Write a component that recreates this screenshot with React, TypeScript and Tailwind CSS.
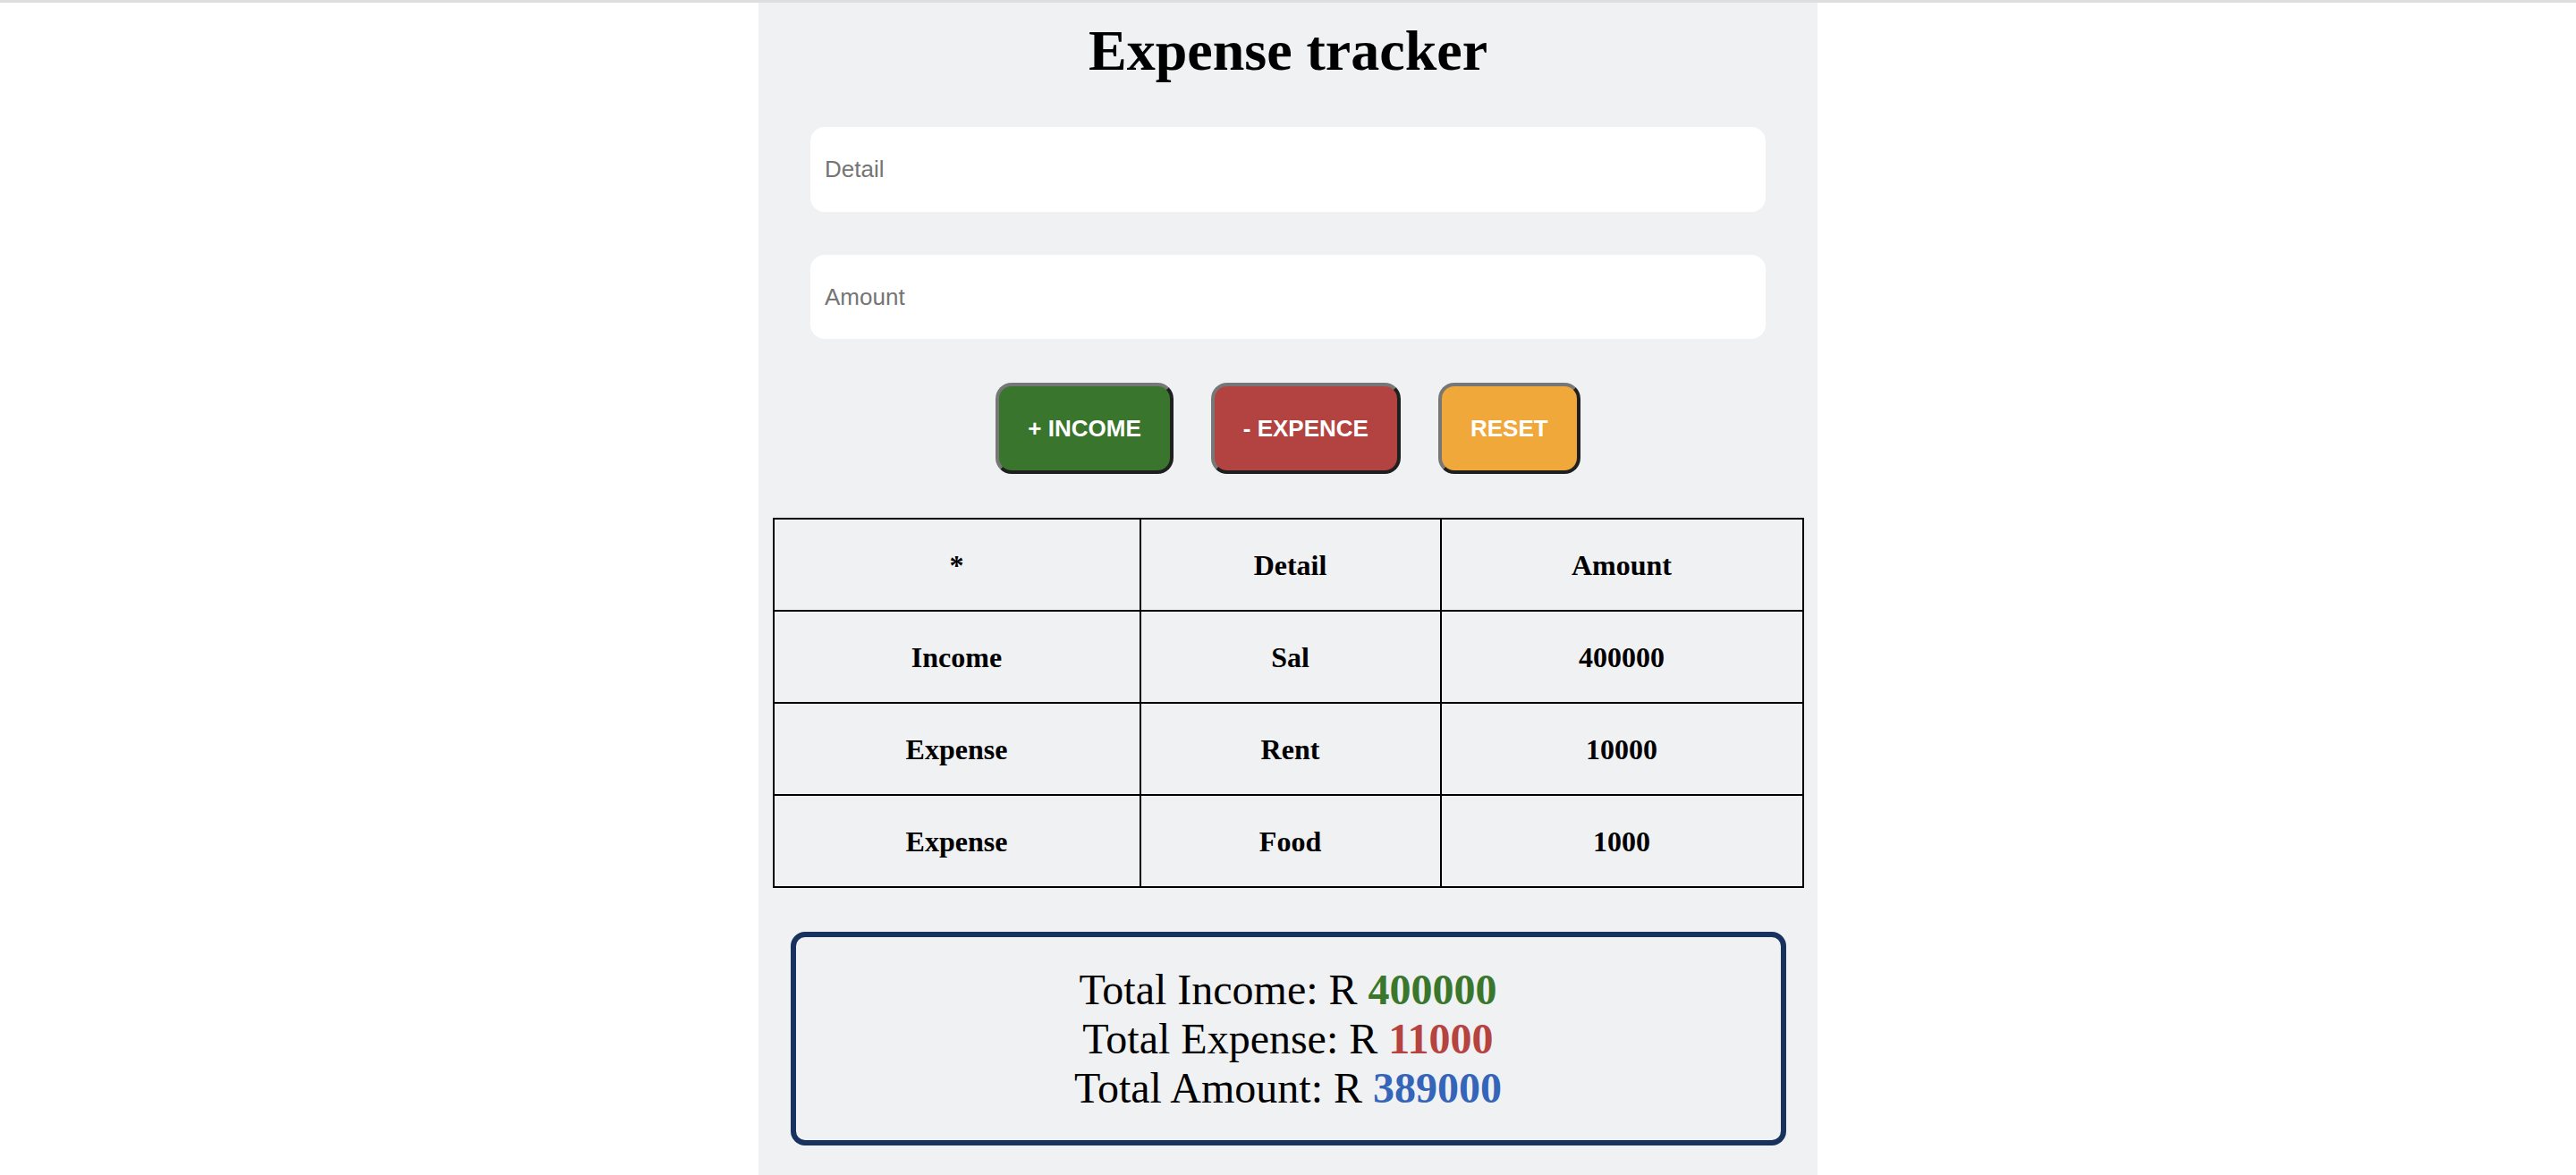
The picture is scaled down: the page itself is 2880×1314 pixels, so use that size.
import { useState } from 'react'

type Kind = 'Income' | 'Expense'

interface Entry {
  kind: Kind
  detail: string
  amount: number
}

const SERIF = "font-['Liberation_Serif','Times_New_Roman',serif]"
const SANS = "font-['Liberation_Sans',Arial,sans-serif]"

const INITIAL: Entry[] = [
  { kind: 'Income', detail: 'Sal', amount: 400000 },
  { kind: 'Expense', detail: 'Rent', amount: 10000 },
  { kind: 'Expense', detail: 'Food', amount: 1000 },
]

// outset-looking bevel shared by the three buttons
const BUTTON =
  'border-4 border-t-[#777777] border-l-[#777777] border-b-[#1f1f1f] border-r-[#1f1f1f] rounded-[18px] px-[32px] h-[102px] text-white text-[26px] font-bold leading-[30px]'

function Field({
  placeholder,
  value,
  onChange,
  className,
}: {
  placeholder: string
  value: string
  onChange: (v: string) => void
  className?: string
}) {
  return (
    <input
      type="text"
      value={value}
      placeholder={placeholder}
      onChange={(e) => onChange(e.target.value)}
      className={`${SANS} ${className ?? ''} block w-[1068px] mx-auto bg-white rounded-[16px] pl-[16px] text-[26px] text-black placeholder:text-[#757575] outline-none`}
    />
  )
}

export default function App() {
  const [detail, setDetail] = useState('')
  const [amount, setAmount] = useState('')
  const [entries, setEntries] = useState<Entry[]>(INITIAL)

  const add = (kind: Kind) => {
    const n = Number(amount)
    if (!detail.trim() || !n) return
    setEntries([...entries, { kind, detail: detail.trim(), amount: n }])
    setDetail('')
    setAmount('')
  }

  const income = entries.filter((e) => e.kind === 'Income').reduce((s, e) => s + e.amount, 0)
  const expense = entries.filter((e) => e.kind === 'Expense').reduce((s, e) => s + e.amount, 0)

  return (
    <div className="min-h-screen bg-white">
      <div className="h-[3px] bg-[#dedede]" />
      <div className={`${SERIF} w-[1184px] mx-auto bg-[#f0f1f2] min-h-[1311px] pt-[17px] pb-[40px]`}>
        <h1 className="text-center text-[64px] font-bold leading-[74px] text-black">Expense tracker</h1>

        <Field placeholder="Detail" value={detail} onChange={setDetail} className="mt-[48px] h-[95px]" />
        <Field placeholder="Amount" value={amount} onChange={setAmount} className="mt-[48px] h-[94px]" />

        <div className={`${SANS} mt-[49px] flex justify-center gap-[42px]`}>
          <button type="button" onClick={() => add('Income')} className={`${BUTTON} bg-[#39752c]`}>
            + INCOME
          </button>
          <button type="button" onClick={() => add('Expense')} className={`${BUTTON} bg-[#b34340]`}>
            - EXPENCE
          </button>
          <button type="button" onClick={() => setEntries([])} className={`${BUTTON} bg-[#f0a83a]`}>
            RESET
          </button>
        </div>

        <table className="mt-[49px] mx-auto w-[1151px] table-fixed border-collapse text-[32px] font-bold text-black">
          <colgroup>
            <col className="w-[410px]" />
            <col className="w-[336px]" />
            <col className="w-[405px]" />
          </colgroup>
          <thead>
            <tr>
              <th className="h-[103px] border-2 border-black p-0">*</th>
              <th className="h-[103px] border-2 border-black p-0">Detail</th>
              <th className="h-[103px] border-2 border-black p-0">Amount</th>
            </tr>
          </thead>
          <tbody>
            {entries.map((e, i) => (
              <tr key={i}>
                <td className="h-[103px] border-2 border-black p-0 text-center">{e.kind}</td>
                <td className="h-[103px] border-2 border-black p-0 text-center">{e.detail}</td>
                <td className="h-[103px] border-2 border-black p-0 text-center">{e.amount}</td>
              </tr>
            ))}
          </tbody>
        </table>

        <div className="mt-[49px] mx-auto w-[1113px] border-[6px] border-[#17325f] rounded-[16px] py-[31px] text-center text-[48px] leading-[55px] text-black">
          <p>
            Total Income: R <span className="font-bold text-[#3a762c]">{income}</span>
          </p>
          <p>
            Total Expense: R <span className="font-bold text-[#b5433f]">{expense}</span>
          </p>
          <p>
            Total Amount: R <span className="font-bold text-[#3465b9]">{income - expense}</span>
          </p>
        </div>
      </div>
    </div>
  )
}
